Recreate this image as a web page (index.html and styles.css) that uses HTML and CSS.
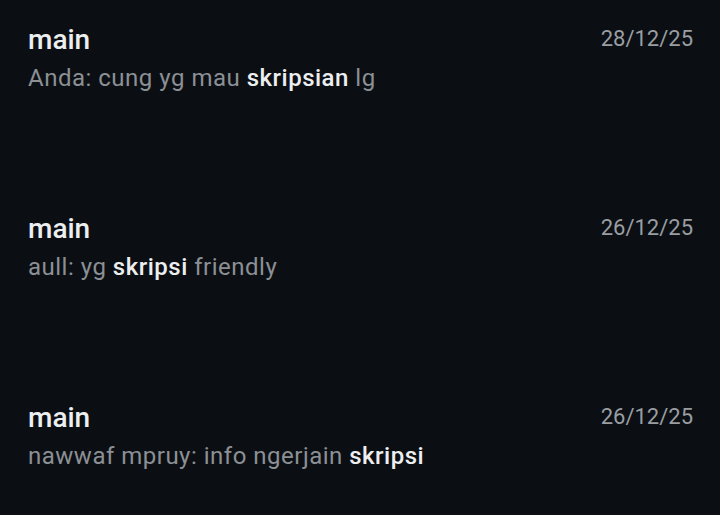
FILE: index.html
```html
<!DOCTYPE html>
<html>
<head>
<meta charset="utf-8">
<link rel="stylesheet" href="styles.css">
</head>
<body>
<div class="list">
  <div class="row">
    <div class="text">
      <div class="title">main</div>
      <div class="snippet">Anda: cung yg mau <b>skripsian</b> lg</div>
    </div>
    <div class="date">28/12/25</div>
  </div>
  <div class="row">
    <div class="text">
      <div class="title">main</div>
      <div class="snippet">aull: yg <b>skripsi</b> friendly</div>
    </div>
    <div class="date">26/12/25</div>
  </div>
  <div class="row">
    <div class="text">
      <div class="title">main</div>
      <div class="snippet">nawwaf mpruy: info ngerjain <b>skripsi</b></div>
    </div>
    <div class="date">26/12/25</div>
  </div>
</div>
</body>
</html>
```
FILE: styles.css
```css
html, body {
  margin: 0;
  padding: 0;
  background: #0b0f13;
  font-family: Roboto, "Noto Sans", sans-serif;
}
body {
  width: 720px;
  height: 515px;
  overflow: hidden;
}
.list {
  display: flex;
  flex-direction: column;
}
.row {
  padding: 23px 27px 96px 28px;
  display: flex;
  justify-content: space-between;
  align-items: flex-start;
}
.row:last-child {
  padding-bottom: 0;
}
.text {
  display: flex;
  flex-direction: column;
  gap: 6px;
}
.title {
  font-size: 28px;
  line-height: 34px;
  font-weight: 500;
  color: #eceef0;
}
.snippet {
  font-size: 24px;
  line-height: 30px;
  letter-spacing: 0.5px;
  color: #8c9095;
}
.snippet b {
  font-weight: 500;
  color: #eceef0;
}
.date {
  font-size: 22px;
  line-height: 34px;
  margin-top: -1px;
  color: #9a9ea3;
}
```
